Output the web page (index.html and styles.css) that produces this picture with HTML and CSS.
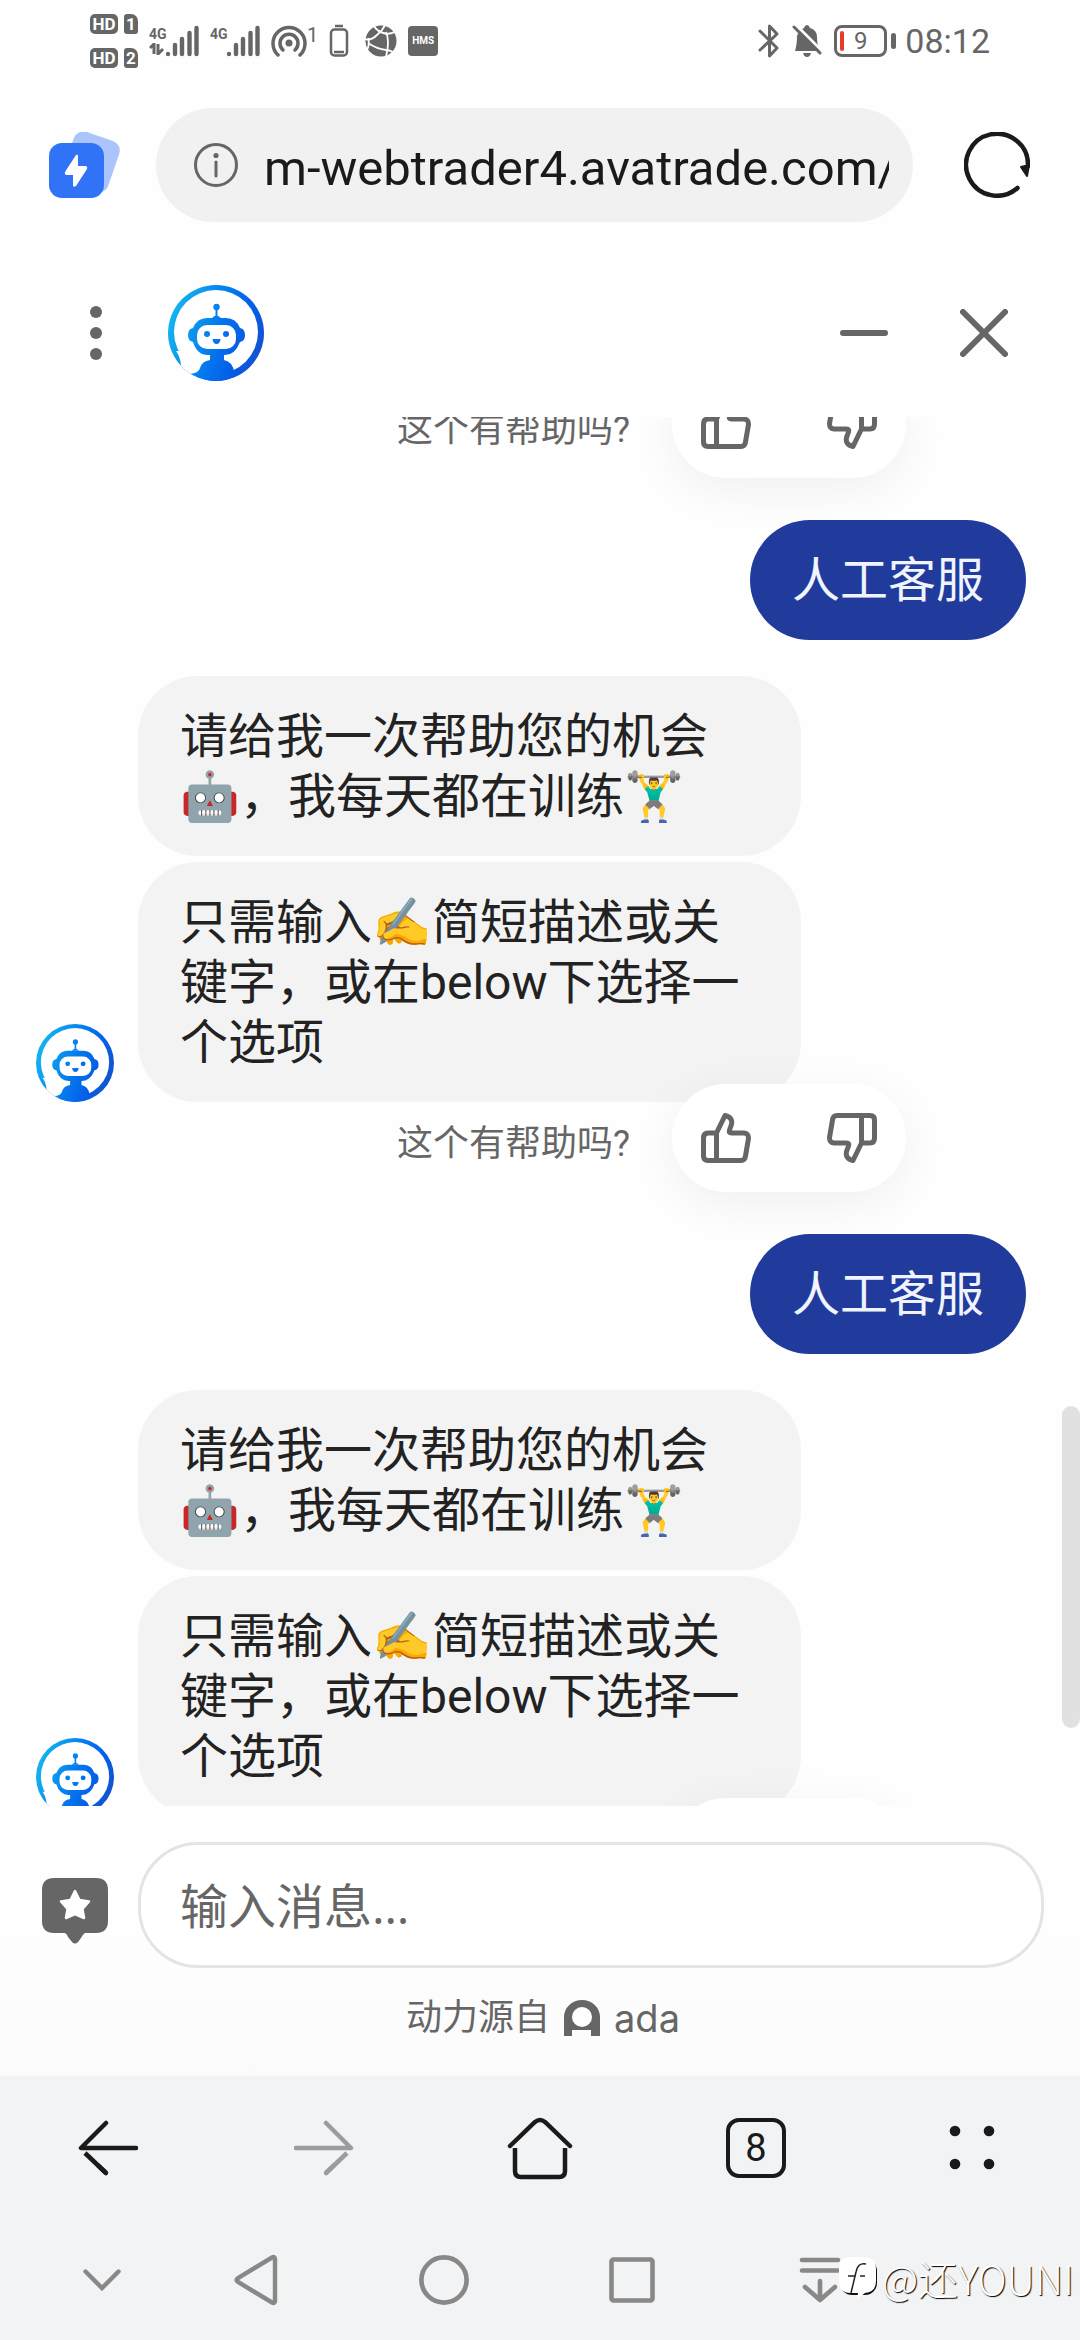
FILE: index.html
```html
<!DOCTYPE html>
<html lang="zh-CN">
<head>
    <meta charset="UTF-8">
    <meta name="viewport" content="width=device-width, initial-scale=1.0">
    <title>AvaTrade</title>
    <link rel="stylesheet" href="styles.css">
</head>
<body>
    <!-- shared shapes -->
    <svg class="defs" width="0" height="0" aria-hidden="true">
        <defs>
            <linearGradient id="botBlue" gradientUnits="userSpaceOnUse" x1="0" y1="30" x2="96" y2="62">
                <stop offset="0" stop-color="#14b8ee"/>
                <stop offset="0.5" stop-color="#0479ef"/>
                <stop offset="0.75" stop-color="#055fe8"/>
                <stop offset="1" stop-color="#1253cf"/>
            </linearGradient>
            <clipPath id="botClip"><circle cx="48" cy="48" r="48"/></clipPath>
        </defs>
        <symbol id="bot" viewBox="0 0 96 96">
            <g clip-path="url(#botClip)">
                <rect width="96" height="96" fill="url(#botBlue)"/>
                <circle cx="48" cy="47" r="42" fill="#fff"/>
                <path d="M8 66Q12 71 13 80L8 84L24 98L34 84L30 66Z" fill="#fff"/>
                <g fill="url(#botBlue)">
                    <circle cx="48.5" cy="22" r="3.2"/>
                    <rect x="47.5" y="23" width="2" height="9"/>
                    <path d="M44 33Q48 28 53 33Z"/>
                    <path d="M39 33H58Q68 33 72 43Q77 44 77 50Q77 56 72 57Q67 70 57 70H56V75Q65 77 66 87L60 98H28L22 89Q31 88 32 83Q34 76 42 75V70H40Q29 70 25 57Q20 56 20 50Q20 44 25 43Q29 33 39 33Z"/>
                </g>
                <rect x="29" y="40" width="39" height="24" rx="10" fill="#fff"/>
                <g fill="url(#botBlue)">
                    <circle cx="39" cy="49" r="3"/>
                    <circle cx="58" cy="49" r="3"/>
                    <path d="M44.500 54H52.500Q52 59 48.500 59Q45 59 44.500 54Z"/>
                </g>
            </g>
        </symbol>
        <symbol id="thumb" viewBox="0 0 50 50">
            <path d="M15.500 20L24 2.500C30 3.500 32 8 30 13C28 18 27 20 31 20H43Q48 20.500 47.400 26L44.500 43Q44 47.500 40 47.500H7Q2.500 47.500 2.500 43V25Q2.500 20 7 20H15.500V47.500" fill="none" stroke="#666" stroke-width="5" stroke-linejoin="round"/>
        </symbol>
        <symbol id="bars" viewBox="0 0 34 32">
            <path d="M3 29v.1M10 20v9M17 14v15M24.500 8v21M31.500 3v26" stroke="#666" stroke-width="4.400" stroke-linecap="round"/>
        </symbol>
    </svg>

    <div class="status">
        <div class="sims">
            <div class="sim"><span class="hd">HD</span><span class="card">1</span></div>
            <div class="sim"><span class="hd">HD</span><span class="card">2</span></div>
        </div>
        <div class="signal">
            <div class="net">4G
                <svg width="16" height="12" viewBox="0 0 16 12"><path d="M1 5L5 1V11M9 1V11L14 6" fill="none" stroke="#666" stroke-width="3"/></svg>
            </div>
            <svg width="34" height="32"><use href="#bars"/></svg>
        </div>
        <div class="signal">
            <div class="net">4G</div>
            <svg width="34" height="32"><use href="#bars"/></svg>
        </div>
        <div class="hotspot">
            <svg width="36" height="32" viewBox="0 0 36 32"><circle cx="18" cy="18" r="3.500" fill="#666"/><g fill="none" stroke="#666" stroke-width="3.500" stroke-linecap="round"><path d="M12 25A9 9 0 1 1 24 25"/><path d="M7 30A16 16 0 1 1 29 30"/></g></svg>
            <span>1</span>
        </div>
        <svg width="20" height="34" viewBox="0 0 20 34"><path d="M6 2H14" stroke="#666" stroke-width="2.500"/><rect x="2" y="5.500" width="16" height="26" rx="3.500" fill="none" stroke="#666" stroke-width="2.500"/><path d="M5 28H15" stroke="#666" stroke-width="2.500"/></svg>
        <svg class="globe" width="32" height="32" viewBox="0 0 32 32"><circle cx="16" cy="16" r="15.500" fill="#666"/><g fill="none" stroke="#fff" stroke-width="1.800"><path d="M9 1Q12 7 22 9Q27 9 31 6"/><path d="M0 14Q6 16 12 10Q18 5 20 0"/><path d="M3 18Q12 24 21 25Q24 25 28 27"/><path d="M21 7Q25 16 21 32"/><path d="M3 13Q5 19 2 25"/></g></svg>
        <span class="hms">HMS</span>
        <div class="status-right">
            <svg width="22" height="34" viewBox="0 0 22 34"><path d="M2 7L19 24L11.500 32V2L19 10L2 26" fill="none" stroke="#666" stroke-width="3" stroke-linecap="round" stroke-linejoin="round"/></svg>
            <svg width="30" height="34" viewBox="0 0 30 34"><path d="M3 27Q5 21 5 12Q7 6 12 4Q13 1 15 1Q17 1 18 4Q25 6 25 13Q25 22 28 27Z" fill="#666"/><path d="M11 29H19Q18 33 15 33Q12 33 11 29Z" fill="#666"/><path d="M4 1L31 28" stroke="#fff" stroke-width="3"/><path d="M2 3L28 29" stroke="#666" stroke-width="3" stroke-linecap="round"/></svg>
            <div class="battery"><i class="charge"></i><span>9</span></div>
            <span class="time">08:12</span>
        </div>
    </div>

    <div class="address">
        <button class="icon-btn" aria-label="加速">
            <svg width="72" height="66" viewBox="0 0 72 66"><rect x="19" y="3" width="48" height="54" rx="10" fill="#abc4fb" transform="rotate(19 43 30)"/><rect x="1" y="11" width="55" height="55" rx="13" fill="#3173f6"/><path d="M28 23Q30 22 30 24V34H38Q40 35 39 37L28 54Q25 56 25 53V43H18Q16 42 17 40Z" fill="#fff"/></svg>
        </button>
        <div class="url">
            <svg width="44" height="44" viewBox="0 0 44 44"><circle cx="22" cy="22" r="20.500" fill="none" stroke="#666" stroke-width="3"/><circle cx="22" cy="12.500" r="2.600" fill="#666"/><path d="M22 19V33" stroke="#666" stroke-width="3" stroke-linecap="round"/></svg>
            <input class="url-input" type="text" aria-label="网址" value="m-webtrader4.avatrade.com/">
        </div>
        <button class="icon-btn" aria-label="刷新">
            <svg width="66" height="66" viewBox="0 0 66 66"><path d="M53.500 56A31 31 0 1 1 64 34" fill="none" stroke="#1a1a1a" stroke-width="4.500" stroke-linecap="round"/><path d="M57 35L65 33L63 44Z" fill="#1a1a1a" stroke="#1a1a1a" stroke-width="2" stroke-linejoin="round"/></svg>
        </button>
    </div>

    <header class="chat-header">
        <button class="icon-btn" aria-label="菜单">
            <svg width="48" height="60" viewBox="0 0 48 60" fill="#666"><circle cx="24" cy="9" r="6"/><circle cx="24" cy="30" r="6"/><circle cx="24" cy="51" r="6"/></svg>
        </button>
        <svg class="logo" width="96" height="96"><use href="#bot"/></svg>
        <button class="icon-btn" aria-label="最小化">
            <svg width="48" height="48" viewBox="0 0 48 48"><path d="M3 24H45" stroke="#666" stroke-width="6" stroke-linecap="round"/></svg>
        </button>
        <button class="icon-btn" aria-label="关闭">
            <svg width="48" height="48" viewBox="0 0 48 48"><path d="M3 3L45 45M45 3L3 45" stroke="#666" stroke-width="6" stroke-linecap="round"/></svg>
        </button>
    </header>

    <main class="chat">
        <div class="messages">
            <div class="feedback">
                <span>这个有帮助吗?</span>
                <div class="votes">
                    <button class="icon-btn" aria-label="有帮助"><svg width="50" height="50"><use href="#thumb"/></svg></button>
                    <button class="icon-btn down" aria-label="没有帮助"><svg width="50" height="50"><use href="#thumb"/></svg></button>
                </div>
            </div>
            <p class="user">人工客服</p>
            <div class="bot">
                <svg class="face" width="78" height="78"><use href="#bot"/></svg>
                <div class="bubbles">
                    <p class="bubble">请给我一次帮助您的机会🤖，我每天都在训练🏋️‍♂️</p>
                    <p class="bubble">只需输入✍️简短描述或关键字，或在below下选择一个选项</p>
                </div>
            </div>
            <div class="feedback">
                <span>这个有帮助吗?</span>
                <div class="votes">
                    <button class="icon-btn" aria-label="有帮助"><svg width="50" height="50"><use href="#thumb"/></svg></button>
                    <button class="icon-btn down" aria-label="没有帮助"><svg width="50" height="50"><use href="#thumb"/></svg></button>
                </div>
            </div>
            <p class="user">人工客服</p>
            <div class="bot">
                <svg class="face" width="78" height="78"><use href="#bot"/></svg>
                <div class="bubbles">
                    <p class="bubble">请给我一次帮助您的机会🤖，我每天都在训练🏋️‍♂️</p>
                    <p class="bubble">只需输入✍️简短描述或关键字，或在below下选择一个选项</p>
                </div>
            </div>
            <div class="feedback">
                <div class="votes">
                    <button class="icon-btn" aria-label="有帮助"><svg width="50" height="50"><use href="#thumb"/></svg></button>
                    <button class="icon-btn down" aria-label="没有帮助"><svg width="50" height="50"><use href="#thumb"/></svg></button>
                </div>
            </div>
        </div>
        <div class="scrollbar"></div>
    </main>

    <footer class="composer">
        <div class="compose-row">
            <button class="icon-btn" aria-label="评价">
                <svg width="66" height="78" viewBox="0 -12 66 78"><path d="M12 0H54Q66 0 66 12V43Q66 55 54 55H43Q41 56 39 60L36 64Q33 67 30 64L26 59Q25 56 23 55H12Q0 55 0 43V12Q0 0 12 0Z" fill="#666"/><path d="M33 13L37.500 22L47 23.500L40.500 31L42 40L33 36L24 40L25.500 31L19 23.500L28.500 22Z" fill="#fff" stroke="#fff" stroke-width="2.500" stroke-linejoin="round"/></svg>
            </button>
            <input class="message-input" type="text" aria-label="输入消息" placeholder="输入消息…">
        </div>
        <a class="powered" href="#">动力源自
            <svg width="36" height="36" viewBox="0 0 36 36"><path d="M0 36V17A18 17 0 0 1 36 17V36H27V30H8V36Z" fill="#666"/><circle cx="18" cy="17" r="10" fill="#fff"/></svg>
            <span class="ada">ada</span>
        </a>
    </footer>

    <nav class="browser-nav">
        <button class="icon-btn" aria-label="后退">
            <svg width="60" height="60" viewBox="0 0 60 60" fill="none" stroke="#1a1a1a" stroke-width="4.500"><path d="M28 5L3 30H58" stroke-linecap="round" stroke-linejoin="round"/><path d="M7 35L28 55" /><path d="M20 47.400L28 55" stroke-linecap="round"/></svg>
        </button>
        <button class="icon-btn" aria-label="前进">
            <svg width="60" height="60" viewBox="0 0 60 60" fill="none" stroke="#9b9c9e" stroke-width="4.500"><path d="M32 5L57 30H2" stroke-linecap="round" stroke-linejoin="round"/><path d="M53 35L32 55"/><path d="M40 47.400L32 55" stroke-linecap="round"/></svg>
        </button>
        <button class="icon-btn" aria-label="主页">
            <svg width="66" height="64" viewBox="0 0 66 64" fill="none" stroke="#1a1a1a" stroke-width="4.500"><path d="M3 30L28 6Q33 2 38 6L63 30" stroke-linecap="round"/><path d="M8 32V55Q8 61 14 61H52Q58 61 58 55V32"/></svg>
        </button>
        <button class="icon-btn tabs" aria-label="标签页">8</button>
        <button class="icon-btn" aria-label="更多">
            <svg width="48" height="48" viewBox="0 0 48 48" fill="#1a1a1a"><circle cx="7" cy="7" r="5.300"/><circle cx="41" cy="7" r="5.300"/><circle cx="7" cy="40" r="5.300"/><circle cx="41" cy="40" r="5.300"/></svg>
        </button>
    </nav>

    <nav class="system-nav">
        <button class="icon-btn" aria-label="收起">
            <svg width="38" height="22" viewBox="0 0 38 22"><path d="M2.500 2.500L19 19L35.500 2.500" fill="none" stroke="#888" stroke-width="4.400" stroke-linecap="round"/></svg>
        </button>
        <button class="icon-btn" aria-label="返回">
            <svg width="44" height="52" viewBox="0 0 44 52"><path d="M41 5V47Q41 50 38 48.500L4 28Q1 26 4 24L38 3.500Q41 2 41 5Z" fill="none" stroke="#888" stroke-width="4.400"/></svg>
        </button>
        <button class="icon-btn" aria-label="桌面">
            <svg width="50" height="50" viewBox="0 0 50 50"><circle cx="25" cy="25" r="22.600" fill="none" stroke="#888" stroke-width="4.600"/></svg>
        </button>
        <button class="icon-btn" aria-label="最近任务">
            <svg width="46" height="46" viewBox="0 0 46 46"><rect x="2.500" y="2.500" width="41" height="41" rx="2" fill="none" stroke="#888" stroke-width="4.600"/></svg>
        </button>
        <button class="icon-btn" aria-label="通知栏">
            <svg width="42" height="46" viewBox="0 0 42 46" fill="none" stroke="#888" stroke-width="4.600" stroke-linecap="round" stroke-linejoin="round"><path d="M3 3H39M3 13.500H39M21 24V43M6 30L21 43L36 30"/></svg>
        </button>
    </nav>

    <div class="watermark">
        <svg width="40" height="44" viewBox="0 0 40 44"><rect x="2" y="3" width="37" height="36" rx="12" fill="#111"/><path d="M12 1H26Q38 1 38 13V25Q38 36 27 37L19 43L20 37H12Q1 37 1 25V13Q1 1 12 1Z" fill="#fff"/><path d="M28 8Q20 6 18 16L13 37M10 20H17M22 20H27" fill="none" stroke="#222" stroke-width="1.500"/></svg>
        <span>@还YOUNI</span>
    </div>
</body>
</html>
```

FILE: styles.css
```css
*{
    margin: 0;
    padding: 0;
    box-sizing: border-box;
}
body{
    display: flex;
    flex-direction: column;
    height: 100vh;
    position: relative;
    overflow: hidden;
    background-color: #fefefe;
    color: #222;
    font-family: Roboto, "Noto Sans CJK SC", sans-serif;
}
svg{
    display: block;
    flex: none;
}
.defs{
    position: absolute;
}
.icon-btn{
    display: flex;
    justify-content: center;
    align-items: center;
    border: none;
    background: none;
    cursor: pointer;
}

/* status bar */
.status{
    display: flex;
    align-items: center;
    gap: 11px;
    height: 82px;
    flex: none;
    padding: 0 90px;
    color: #666;
}
.sims{
    display: flex;
    flex-direction: column;
    gap: 14px;
}
.sim{
    display: flex;
    gap: 6px;
}
.hd, .card{
    width: 28px;
    height: 20px;
    border-radius: 5px;
    background-color: #666;
    color: #fff;
    font-size: 17px;
    font-weight: bold;
    line-height: 20px;
    text-align: center;
}
.card{
    width: 14px;
    border-radius: 3px 7px 3px 3px;
}
.signal{
    display: flex;
}
.net{
    width: 16px;
    height: 32px;
    font-size: 14px;
    font-weight: bold;
    line-height: 18px;
}
.hotspot{
    display: flex;
    font-size: 20px;
    line-height: 20px;
}
.globe{
    margin-left: 5px;
}
.hms{
    width: 30px;
    height: 30px;
    border-radius: 4px;
    background-color: #666;
    color: #fff;
    font-size: 10px;
    font-weight: bold;
    line-height: 30px;
    text-align: center;
}
.status-right{
    display: flex;
    align-items: center;
    gap: 12px;
    margin-left: auto;
}
.battery{
    position: relative;
    display: flex;
    justify-content: center;
    align-items: center;
    width: 53px;
    height: 32px;
    margin-right: 6px;
    border: 3px solid #666;
    border-radius: 8px;
    font-size: 24px;
}
.battery::after{
    content: "";
    position: absolute;
    right: -12px;
    width: 5px;
    height: 16px;
    border-radius: 3px;
    background-color: #666;
}
.charge{
    position: absolute;
    left: 3px;
    width: 4px;
    height: 20px;
    border-radius: 2px;
    background-color: #e8392b;
}
.time{
    font-size: 34px;
}

/* address bar */
.address{
    display: flex;
    align-items: center;
    gap: 36px;
    flex: none;
    padding: 26px 50px 27px 48px;
}
.url{
    display: flex;
    align-items: center;
    gap: 26px;
    flex: 1;
    min-width: 0;
    height: 114px;
    padding: 0 24px 0 38px;
    border-radius: 57px;
    background-color: #f1f1f1;
}
.address .icon-btn:last-child{
    margin-left: 15px;
}
.url-input{
    flex: 1;
    min-width: 0;
    padding-top: 6px;
    border: none;
    background: none;
    color: #1a1a1a;
    font-family: inherit;
    font-size: 49px;
}

/* chat */
.chat-header{
    display: flex;
    align-items: center;
    gap: 72px;
    height: 168px;
    flex: none;
    padding: 0 72px;
}
.logo{
    margin-left: -24px;
    margin-right: auto;
}
.chat{
    position: relative;
    flex: 1;
    min-height: 0;
    overflow: hidden;
}
/* list is scrolled a little past its first row */
.messages{
    margin-top: -47px;
    padding: 0 54px 0 36px;
}
.feedback{
    display: flex;
    align-items: center;
    justify-content: flex-end;
    gap: 42px;
    margin-right: 120px;
    color: #666;
    font-size: 36px;
}
.feedback span{
    padding-top: 4px;
}
.votes{
    position: relative;
    display: flex;
    justify-content: space-between;
    width: 234px;
    height: 108px;
    padding: 0 29px;
    border-radius: 54px;
    background-color: #fff;
    box-shadow: 0 12px 48px rgba(0, 0, 0, 0.06);
}
.down svg{
    transform: rotate(180deg);
}
.user{
    position: relative;
    width: fit-content;
    margin: 42px 0 36px auto;
    padding: 31px 42px 29px;
    border-radius: 60px;
    background-color: #203b9b;
    color: #f0f4ff;
    font-size: 48px;
    line-height: 60px;
}
.bot{
    display: flex;
    align-items: flex-end;
    gap: 24px;
    margin-bottom: -18px;
}
.bubbles{
    display: flex;
    flex-direction: column;
    gap: 6px;
    width: 67%;
}
.bubble{
    padding: 31px 42px 29px;
    border-radius: 60px;
    background-color: #f3f3f3;
    font-size: 48px;
    line-height: 60px;
}
.scrollbar{
    position: absolute;
    top: 989px;
    right: 0;
    width: 18px;
    height: 322px;
    border-radius: 9px;
    background-color: #e1e1e1;
}

/* message box */
.composer{
    flex: none;
    padding: 36px 36px 0 42px;
    background: linear-gradient(#fefefe 45%, #fbfbfb);
}
.compose-row{
    display: flex;
    align-items: center;
    gap: 30px;
}
.message-input{
    flex: 1;
    min-width: 0;
    height: 126px;
    padding: 0 39px;
    border: 3px solid #e4e4e4;
    border-radius: 60px;
    background-color: #fff;
    font-family: "Open Sans", "Noto Sans CJK SC", sans-serif;
    font-size: 48px;
}
.message-input::placeholder{
    color: #666;
}
.powered{
    display: flex;
    justify-content: center;
    align-items: center;
    gap: 14px;
    padding: 26px 0 34px;
    color: #666;
    font-size: 36px;
    line-height: 48px;
    text-decoration: none;
}
.ada{
    font-family: Inter, sans-serif;
    font-size: 38px;
}

/* bottom bars */
.browser-nav, .system-nav{
    display: grid;
    grid-template-columns: repeat(5, 1fr);
    align-items: center;
    justify-items: center;
    height: 144px;
    flex: none;
    background-color: #f1f3f5;
}
.tabs{
    width: 60px;
    height: 60px;
    border: 4px solid #1a1a1a;
    border-radius: 13px;
    color: #1a1a1a;
    font-family: inherit;
    font-size: 38px;
}
.system-nav{
    grid-template-columns: 30fr repeat(4, 47fr);
    height: 120px;
    padding: 0 166px 0 42px;
}
.watermark{
    position: absolute;
    right: 6px;
    bottom: 34px;
    display: flex;
    align-items: center;
    gap: 4px;
    color: #fff;
    font-family: "Noto Sans CJK SC", sans-serif;
    font-size: 40px;
    font-weight: 300;
    line-height: 56px;
    text-shadow: 1px 1px 1px #000;
}
```
